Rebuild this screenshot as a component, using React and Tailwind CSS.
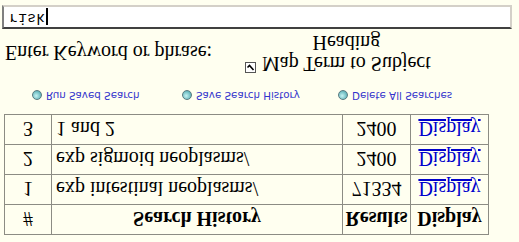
import React from 'react';

// Search history panel (the reference shot is flipped top-to-bottom)
const rows = [
    { n: '1', q: 'exp intestinal neoplasms/', r: '71334' },
    { n: '2', q: 'exp sigmoid neoplasms/', r: '2400' },
    { n: '3', q: '1 and 2', r: '2400' },
];

const RadioDot = () => (
    <span className="inline-block w-[10px] h-[10px] rounded-full border border-[#5a7a80] bg-[radial-gradient(circle_at_40%_40%,#c6f2f2,#3a9ca4)] mr-[4px]"></span>
);

const App = () => {
    const cell = 'border border-[#8c8c84] h-[30px] leading-none';
    return (
        <div className="w-[519px] h-[242px] bg-[#fffff0] overflow-hidden -scale-y-100 font-['Liberation_Serif',serif] text-black">
            <div className="pt-[7px] pl-[4px]">
                <table className="border-collapse w-[485px] text-[20px]">
                    <thead>
                        <tr className="font-bold">
                            <th className={`${cell} w-[47px] font-normal`}>#</th>
                            <th className={`${cell} w-[291px]`}>Search History</th>
                            <th className={`${cell} w-[68px]`}>Results</th>
                            <th className={`${cell}`}>Display</th>
                        </tr>
                    </thead>
                    <tbody>
                        {rows.map(row => (
                            <tr key={row.n}>
                                <td className={`${cell} text-center`}>{row.n}</td>
                                <td className={`${cell} pl-[4px]`}>{row.q}</td>
                                <td className={`${cell} text-center`}>{row.r}</td>
                                <td className={`${cell} text-center`}>
                                    <span className="text-[#0000cc] underline">Display</span>
                                </td>
                            </tr>
                        ))}
                    </tbody>
                </table>
            </div>

            <div className="flex items-center h-[20px] mt-[9px] pl-[32px] font-['DejaVu_Sans',sans-serif] text-[10.3px] text-[#3333cc]">
                <div className="flex items-center w-[150px]"><RadioDot />Run Saved Search</div>
                <div className="flex items-center w-[156px]"><RadioDot />Save Search History</div>
                <div className="flex items-center"><RadioDot />Delete All Searches</div>
            </div>

            <div className="flex items-center mt-[11px] h-[42px]">
                <div className="pl-[5px] text-[20px] leading-none w-[245px]">Enter Keyword or phrase:</div>
                <div className="flex items-start self-start">
                    <span className="mt-[1px] w-[11px] h-[11px] border border-[#555] bg-white flex items-center justify-center">
                        <svg width="9" height="9" viewBox="0 0 9 9"><path d="M1.5 4.5 L3.5 6.5 L7.5 2" stroke="#000" strokeWidth="1.6" fill="none" /></svg>
                    </span>
                    <div className="ml-[6px] text-[20px] leading-[21px] text-center">
                        Map Term to Subject<br />Heading
                    </div>
                </div>
            </div>

            <div className="mx-[2px] mt-[3px] w-[510px] h-[24px] bg-white border-2 border-t-[#404040] border-l-[#808080] border-r-[#d4d0c8] border-b-[#d4d0c8] flex items-center pl-[5px] font-['Liberation_Mono',monospace] text-[15px]">
                risk<span className="inline-block w-[2px] h-[17px] bg-black ml-[1px]"></span>
            </div>
        </div>
    );
};

export default App;
